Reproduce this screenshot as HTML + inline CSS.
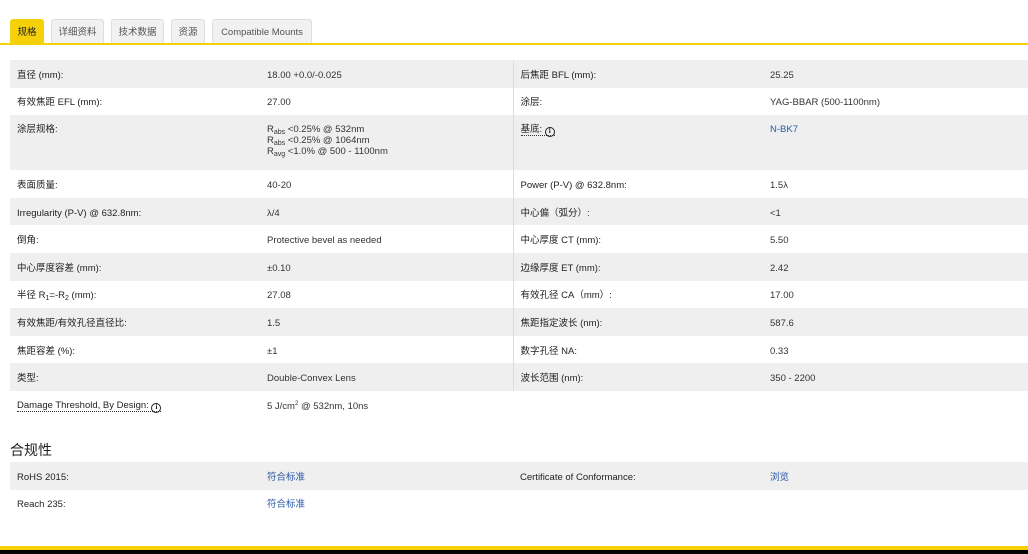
<!DOCTYPE html>
<html><head><meta charset="utf-8"><style>
*{margin:0;padding:0;box-sizing:border-box}
body{width:1028px;height:554px;overflow:hidden;background:#fff;font-family:"Liberation Sans","Noto Sans CJK SC",sans-serif;font-size:9.5px;color:#333;position:relative}
.tabs{position:absolute;top:19px;left:10px;height:25px;display:flex;gap:7px}
.tab{height:24px;padding:0 6.5px;line-height:26px;background:#f1f1f1;border:1px solid #ddd;border-bottom:none;border-radius:3px 3px 0 0;color:#555;font-size:9.5px}
.tab.a{background:#f6d10a;border-color:#f6d10a;color:#222}
.tab.l{padding:0 8px}
.line{position:absolute;top:43px;left:0;width:1028px;height:2px;background:#f6d10a}
table{position:absolute;left:10px;top:60px;width:1018px;border-collapse:collapse}
td{height:27.6px;vertical-align:middle;padding:3px 7px 0;line-height:11px}
td:nth-child(odd){color:#222}
tr:nth-child(odd) td{background:#efefef}
td:nth-child(1){width:250px}
td:nth-child(2){width:253px}
td:nth-child(3){width:250px;border-left:1px solid #ddd}
td:nth-child(3).nb{border-left:none}
.tall td{height:55px;vertical-align:top;padding-top:9px}
td.lk{color:#2a5aa8}
.u{border-bottom:1px dotted #333}
.i{display:inline-block;width:10px;height:10px;border:1.5px solid #222;border-radius:50%;font-size:7px;line-height:7px;text-align:center;font-weight:bold;vertical-align:-1px;font-family:"Liberation Serif",serif}
sub{font-size:7px;vertical-align:-2px;line-height:0}
sup{font-size:6px;line-height:0}
h3{position:absolute;left:10px;top:440px;font-size:14px;font-weight:normal;color:#222}
table.c{top:462px}
.bot{position:absolute;left:0;top:546px;width:1028px;height:4px;background:#f6d10a}
.blk{position:absolute;left:0;top:550px;width:1028px;height:4px;background:#000}
</style></head><body>
<div class="tabs"><div class="tab a">规格</div><div class="tab">详细资料</div><div class="tab">技术数据</div><div class="tab">资源</div><div class="tab l">Compatible Mounts</div></div>
<div class="line"></div>
<table>
<tr><td>直径 (mm):</td><td>18.00 +0.0/-0.025</td><td>后焦距 BFL (mm):</td><td>25.25</td></tr>
<tr><td>有效焦距 EFL (mm):</td><td>27.00</td><td>涂层:</td><td>YAG-BBAR (500-1100nm)</td></tr>
<tr class="tall"><td>涂层规格:</td><td>R<sub>abs</sub> &lt;0.25% @ 532nm<br>R<sub>abs</sub> &lt;0.25% @ 1064nm<br>R<sub>avg</sub> &lt;1.0% @ 500 - 1100nm</td><td><span class="u">基底: <span class="i">i</span></span></td><td class="lk">N-BK7</td></tr>
<tr><td>表面质量:</td><td>40-20</td><td>Power (P-V) @ 632.8nm:</td><td>1.5λ</td></tr>
<tr><td>Irregularity (P-V) @ 632.8nm:</td><td>λ/4</td><td>中心偏（弧分）:</td><td>&lt;1</td></tr>
<tr><td>倒角:</td><td>Protective bevel as needed</td><td>中心厚度 CT (mm):</td><td>5.50</td></tr>
<tr><td>中心厚度容差 (mm):</td><td>±0.10</td><td>边缘厚度 ET (mm):</td><td>2.42</td></tr>
<tr><td>半径 R<sub>1</sub>=-R<sub>2</sub> (mm):</td><td>27.08</td><td>有效孔径 CA（mm）:</td><td>17.00</td></tr>
<tr><td>有效焦距/有效孔径直径比:</td><td>1.5</td><td>焦距指定波长 (nm):</td><td>587.6</td></tr>
<tr><td>焦距容差 (%):</td><td>±1</td><td>数字孔径 NA:</td><td>0.33</td></tr>
<tr><td>类型:</td><td>Double-Convex Lens</td><td>波长范围 (nm):</td><td>350 - 2200</td></tr>
<tr><td style="background:#fff"><span class="u">Damage Threshold, By Design: <span class="i">i</span></span></td><td style="background:#fff">5 J/cm<sup>2</sup> @ 532nm, 10ns</td><td class="nb" style="background:#fff"></td><td style="background:#fff"></td></tr>
</table>
<h3>合规性</h3>
<table class="c">
<tr><td>RoHS 2015:</td><td class="lk">符合标准</td><td class="nb">Certificate of Conformance:</td><td class="lk">浏览</td></tr>
<tr><td>Reach 235:</td><td class="lk">符合标准</td><td class="nb"></td><td></td></tr>
</table>
<div class="bot"></div><div class="blk"></div>
</body></html>
